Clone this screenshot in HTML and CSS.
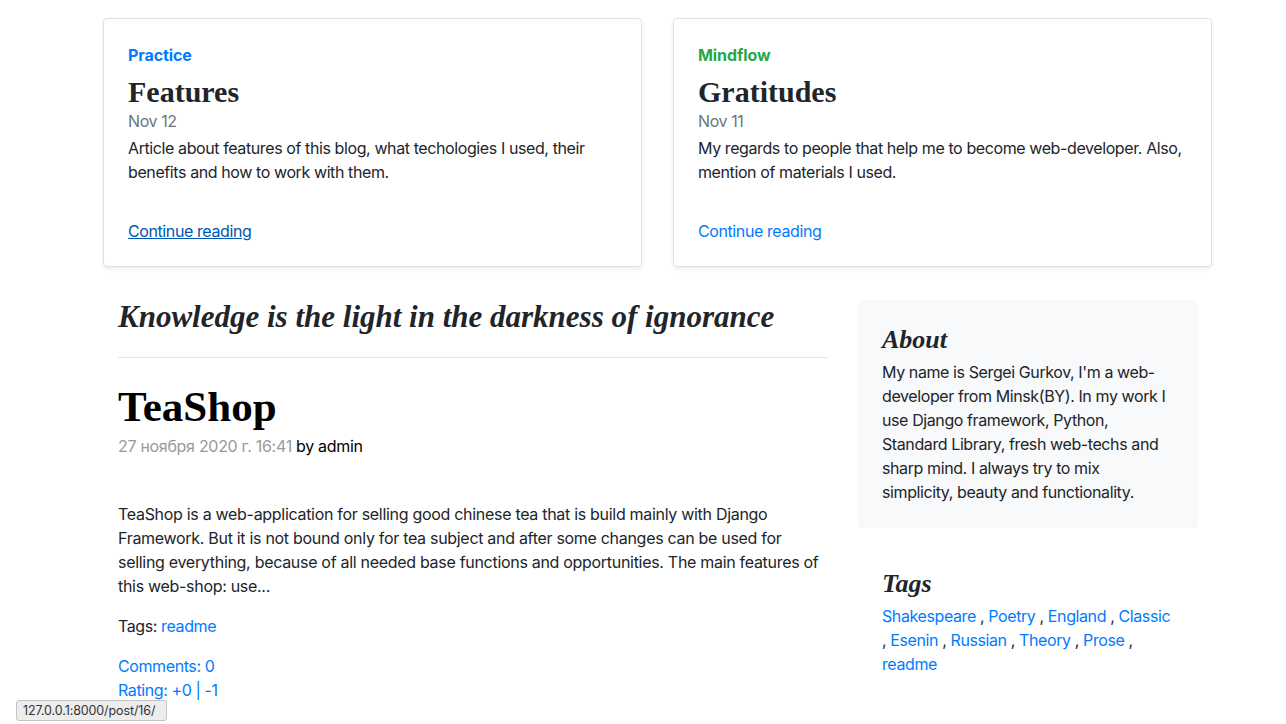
FILE: index.html
```html
<!DOCTYPE html>
<html lang="en">
<head>
<meta charset="utf-8">
<title>Blog</title>
<link rel="stylesheet" href="styles.css">
</head>
<body>
<div class="featured">
  <div class="card">
    <strong class="cat cat-blue">Practice</strong>
    <h3 class="card-title">Features</h3>
    <div class="card-date">Nov 12</div>
    <p class="card-text">Article about features of this blog, what techologies I used, their benefits and how to work with them.</p>
    <a href="#" class="card-link hover">Continue reading</a>
  </div>
  <div class="card">
    <strong class="cat cat-green">Mindflow</strong>
    <h3 class="card-title">Gratitudes</h3>
    <div class="card-date">Nov 11</div>
    <p class="card-text">My regards to people that help me to become web-developer. Also, mention of materials I used.</p>
    <a href="#" class="card-link">Continue reading</a>
  </div>
</div>

<div class="content">
  <main class="blog-main">
    <h3 class="motto">Knowledge is the light in the darkness of ignorance</h3>
    <article class="post">
      <h2 class="post-title">TeaShop</h2>
      <p class="post-meta"><span class="post-date">27 ноября 2020 г. 16:41</span> by admin</p>
      <p class="post-text">TeaShop is a web-application for selling good chinese tea that is build mainly with Django Framework. But it is not bound only for tea subject and after some changes can be used for selling everything, because of all needed base functions and opportunities. The main features of this web-shop: use...</p>
      <p class="post-tags">Tags: <a href="#">readme</a></p>
      <div class="post-links">
        <a href="#">Comments: 0</a><br>
        <a href="#">Rating: +0 | -1</a>
      </div>
    </article>
  </main>
  <aside class="sidebar">
    <div class="about">
      <h4 class="side-title">About</h4>
      <p class="side-text">My name is Sergei Gurkov, I'm a web-developer from Minsk(BY). In my work I use Django framework, Python, Standard Library, fresh web-techs and sharp mind. I always try to mix simplicity, beauty and functionality.</p>
    </div>
    <div class="tags">
      <h4 class="side-title">Tags</h4>
      <p class="side-text"><a href="#">Shakespeare</a> , <a href="#">Poetry</a> , <a href="#">England</a> , <a href="#">Classic</a> , <a href="#">Esenin</a> , <a href="#">Russian</a> , <a href="#">Theory</a> , <a href="#">Prose</a> , <a href="#">readme</a></p>
    </div>
  </aside>
</div>

<div class="status">127.0.0.1:8000/post/16/</div>
</body>
</html>
```

FILE: styles.css
```css
* { box-sizing: border-box; }
html, body { margin: 0; padding: 0; }
body {
  font-family: "Inter", "Roboto", "Liberation Sans", sans-serif;
  font-size: 16px;
  line-height: 24px;
  letter-spacing: -0.4px;
  color: #212529;
  background: #fff;
}
a { color: #007bff; text-decoration: none; }

.featured {
  display: flex;
  gap: 31px;
  padding: 18px 0 0 103px;
}
.card {
  width: 539px;
  height: 249px;
  border: 1px solid #dee2e6;
  border-radius: 4px;
  box-shadow: 0 2px 4px rgba(0,0,0,.075);
  padding: 24px 24px 23px;
  display: flex;
  flex-direction: column;
}
.cat { display: inline-block; margin-bottom: 8px; font-weight: 700; letter-spacing: -0.1px; }
.cat-blue { color: #007bff; }
.cat-green { color: #28a745; }
.card-title {
  margin: 0;
  font-family: "Liberation Serif", "DejaVu Serif", serif;
  font-weight: 700;
  font-size: 30px;
  line-height: 33.6px;
  letter-spacing: 0;
  color: #212529;
}
.card-date { color: #6c757d; margin-bottom: 3px; }
.card-text { margin: 0 0 auto; }
.card-link { align-self: flex-start; }
.card-link.hover { color: #0056b3; text-decoration: underline; }

.content {
  display: flex;
  gap: 30px;
  margin-top: 33px;
  padding-left: 118px;
}
.blog-main { width: 710px; }
.motto {
  margin: 0 0 25px;
  padding-bottom: 23px;
  border-bottom: 1px solid #e5e5e5;
  font-family: "Liberation Serif", "DejaVu Serif", serif;
  font-style: italic;
  font-weight: 700;
  font-size: 31px;
  line-height: 33.6px;
  letter-spacing: 0;
  color: #212529;
}
.post-title {
  margin: 0 0 3px;
  font-family: "Liberation Serif", "DejaVu Serif", serif;
  font-weight: 700;
  font-size: 43px;
  line-height: 48px;
  letter-spacing: 0;
  color: #000;
}
.post-meta { margin: 0 0 44px; color: #000; letter-spacing: -0.3px; }
.post-date { color: #999; }
.post-text { margin: 0 0 16px; letter-spacing: -0.3px; }
.post-tags { margin: 0 0 16px; }

.sidebar { width: 340px; }
.about {
  background: #f8f9fa;
  border-radius: 4px;
  padding: 24px;
  margin-bottom: 16px;
}
.tags { padding: 24px; }
.side-title {
  margin: 0 0 5px;
  padding-top: 2px;
  font-family: "Liberation Serif", "DejaVu Serif", serif;
  font-style: italic;
  font-weight: 700;
  font-size: 26px;
  line-height: 28.8px;
  letter-spacing: 0;
  color: #212529;
}
.side-text { margin: 0; }

.status {
  position: fixed;
  left: 16px;
  bottom: 3px;
  width: 151px;
  height: 21px;
  padding: 0 6px;
  font-family: "Inter", "Liberation Sans", sans-serif;
  font-size: 12.5px;
  line-height: 19px;
  letter-spacing: -0.1px;
  color: #333;
  background: #ededed;
  border: 1px solid #c4c4c4;
  border-radius: 3px;
}
```
